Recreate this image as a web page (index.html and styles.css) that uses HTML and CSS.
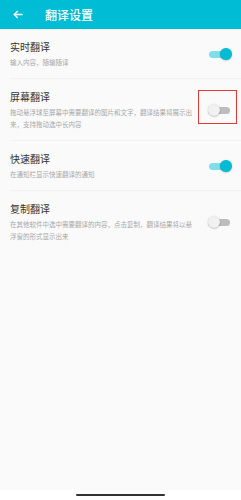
FILE: index.html
```html
<!DOCTYPE html>
<html lang="zh">
<head>
  <meta charset="UTF-8">
  <meta name="viewport" content="width=device-width, initial-scale=1.0">
  <title>翻译设置</title>
  <link rel="stylesheet" href="styles.css">
</head>
<body>
  <header class="toolbar">
    <svg class="back" width="10" height="9" viewBox="0 0 10 9">
      <path d="M9.5 4.5H1.2M4.8 0.9L1.2 4.5l3.6 3.6" fill="none" stroke="#fff" stroke-width="1.4"/>
    </svg>
    <span class="title">翻译设置</span>
  </header>
  <main class="list">
    <div class="item">
      <div class="text">
        <p class="name">实时翻译</p>
        <p class="desc">输入内容，随输随译</p>
      </div>
      <span class="switch on"></span>
    </div>
    <div class="item">
      <div class="text">
        <p class="name">屏幕翻译</p>
        <p class="desc">拖动悬浮球至屏幕中需要翻译的图片和文字，翻译结果将展示出来，支持拖动选中长内容</p>
      </div>
      <span class="switch"></span>
      <span class="mark"></span>
    </div>
    <div class="item">
      <div class="text">
        <p class="name">快速翻译</p>
        <p class="desc">在通知栏显示快速翻译的通知</p>
      </div>
      <span class="switch on"></span>
    </div>
    <div class="item">
      <div class="text">
        <p class="name">复制翻译</p>
        <p class="desc">在其他软件中选中需要翻译的内容，点击复制，翻译结果将以悬浮窗的形式显示出来</p>
      </div>
      <span class="switch"></span>
    </div>
  </main>
  <div class="navbar"><span class="pill"></span></div>
</body>
</html>
```

FILE: styles.css
```css
*{
  margin:0;
  padding:0;
  box-sizing:border-box;
}
body{
  width:241px;
  height:500px;
  display:flex;
  flex-direction:column;
  background-color:#fafafa;
  font-family:"Noto Sans CJK SC","Noto Sans",sans-serif;
}
.toolbar{
  height:29px;
  background-color:#00bcd4;
  display:flex;
  align-items:center;
  padding-left:13px;
  gap:22px;
}
.back{
  display:block;
}
.title{
  color:#fff;
  font-size:12px;
  line-height:16px;
  font-weight:500;
}
.list{
  flex:1;
}
.item{
  position:relative;
  display:flex;
  align-items:center;
  margin-left:10px;
  padding:11px 9px 10px 0;
  border-bottom:1px solid #f1f1f1;
}
.item:last-child{
  border-bottom:none;
}
.text{
  flex:1;
  padding-right:12px;
}
.name{
  font-size:10px;
  line-height:14px;
  color:#333;
  margin-bottom:2px;
}
.desc{
  font-size:6.5px;
  line-height:12px;
  color:#a8a8a8;
}
.switch{
  position:relative;
  flex:none;
  width:24px;
  height:12px;
}
.switch::before{
  content:"";
  position:absolute;
  left:1px;
  right:2px;
  top:2.5px;
  height:7px;
  border-radius:4px;
  background-color:#bdbdbd;
}
.switch::after{
  content:"";
  position:absolute;
  left:0;
  top:0;
  width:12px;
  height:12px;
  border-radius:50%;
  background-color:#f1f1f1;
  box-shadow:0 0.5px 1.5px rgba(0,0,0,0.35);
}
.switch.on::before{
  background-color:#80deea;
}
.switch.on::after{
  left:auto;
  right:0;
  background-color:#00bcd4;
}
.mark{
  position:absolute;
  left:188px;
  top:11px;
  width:39px;
  height:34px;
  border:1px solid #e53935;
}
.navbar{
  height:10px;
  background-color:#fff;
  display:flex;
  justify-content:center;
  padding-top:4px;
}
.pill{
  width:89px;
  height:2px;
  border-radius:1px;
  background-color:#333;
}
```
